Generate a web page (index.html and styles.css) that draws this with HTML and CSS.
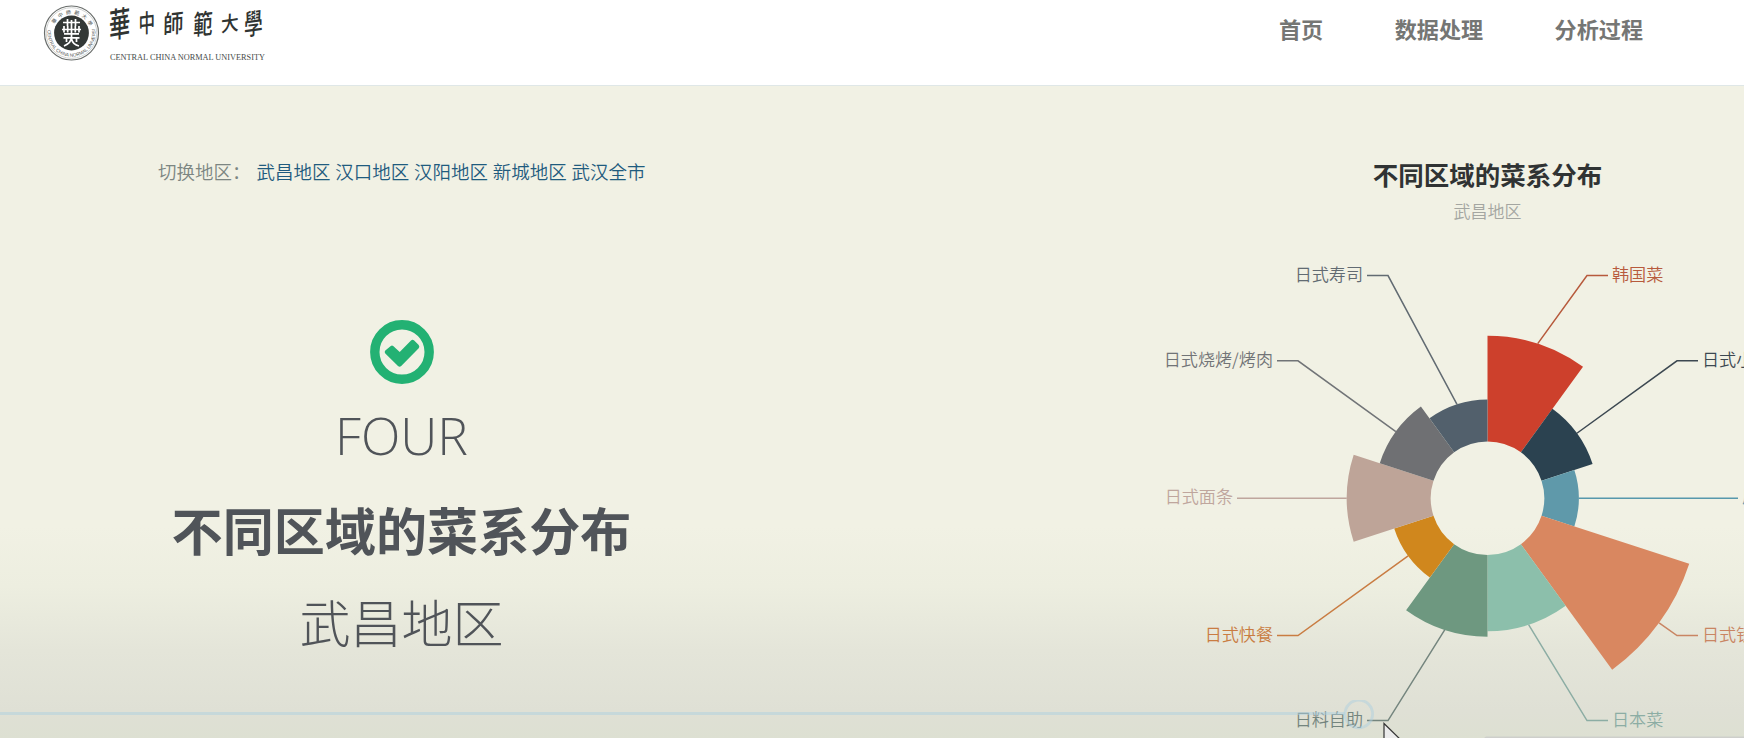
FILE: index.html
```html
<!DOCTYPE html>
<html lang="zh-CN">
<head>
<meta charset="utf-8">
<title>不同区域的菜系分布</title>
<link rel="stylesheet" href="styles.css">
</head>
<body>
<header class="header">
  <svg class="logo" width="240" height="66" viewBox="40 0 240 66">
    <circle cx="71.5" cy="33" r="27" fill="#fff" stroke="#6a6e6c" stroke-width="1.2"/>
    <circle cx="71.5" cy="33" r="25.3" fill="none" stroke="#a5a8a6" stroke-width=".5"/>
    <circle cx="71.5" cy="33" r="17.4" fill="#333836"/>
    <g fill="none" stroke="#fff" stroke-width="1.7">
      <path d="M63 22.500h17M67.500 19v7M75.500 19v7M64 26v6.500M67.700 26v6.500M71.500 20v18M75.300 26v6.500M79 26v6.500M62 29.500h19M64 33.800h15"/>
      <path d="M63.500 37.800h16M71.500 37c0 4-3 7-7.500 9M71.500 39c1 4 3 6 7.500 7M66.500 37.500v4.500M76.500 37.500v4.500"/>
    </g>
    <path id="seal-top" d="M53.500 26a19.500 19.500 0 0 1 36 0" fill="none"/>
    <path id="seal-bottom" d="M47.800 29a24 24 0 1 0 47.400 0" fill="none"/>
    <text class="seal-cn"><textPath href="#seal-top" startOffset="2" textLength="44">華中師範大學</textPath></text>
    <text class="seal-en"><textPath href="#seal-bottom" startOffset="1" textLength="88" lengthAdjust="spacingAndGlyphs">CENTRAL CHINA NORMAL UNIVERSITY</textPath></text>
    <g class="wordmark">
      <text transform="translate(109 38.500) rotate(-10) skewX(-10) scale(.8 1.25)">華</text>
      <text transform="translate(138.500 33.500) rotate(-8) skewX(-8) scale(.62 .92)">中</text>
      <text transform="translate(163 34) rotate(-7) skewX(-8) scale(.76 .92)">師</text>
      <text transform="translate(193 35) rotate(-6) skewX(-8) scale(.72 1)">範</text>
      <text transform="translate(221 32) rotate(-8) skewX(-8) scale(.66 .75)">大</text>
      <text transform="translate(244 35.500) rotate(-8) skewX(-8) scale(.7 1.05)">學</text>
    </g>
    <text class="wordmark-en" x="110" y="59.500" textLength="155" lengthAdjust="spacingAndGlyphs">CENTRAL CHINA NORMAL UNIVERSITY</text>
  </svg>
  <nav class="nav"><a>首页</a><a>数据处理</a><a>分析过程</a></nav>
</header>
<main class="main">
  <section class="intro">
    <p class="switcher"><span class="switcher-label">切换地区：</span><a>武昌地区</a> <a>汉口地区</a> <a>汉阳地区</a> <a>新城地区</a> <a>武汉全市</a></p>
    <div class="summary">
      <svg class="check" width="64" height="64" viewBox="0 0 64 64">
        <circle cx="32" cy="32" r="27.200" fill="none" stroke="#23b173" stroke-width="9.400"/>
        <path d="M20.800 26Q22 25 23.200 26L29.700 32 41 20.500Q42.600 19 44.200 20.500L48.700 25Q50 26.700 48.700 28.300L31.200 46Q29.600 47.500 28 46L15.300 33.500Q14 32 15.300 30.600Z" fill="#23b173"/>
      </svg>
      <p class="step">FOUR</p>
      <h1 class="title">不同区域的菜系分布</h1>
      <p class="area">武昌地区</p>
    </div>
  </section>
  <section class="chart">
    <h2 class="chart-title">不同区域的菜系分布</h2>
    <p class="chart-subtitle">武昌地区</p>
    <svg class="rose" width="604" height="498" viewBox="1140 240 604 498">
      <g id="slices"></g>
      <g id="leaders" fill="none" stroke-width="1.500"></g>
      <g id="labels"></g>
    </svg>
  </section>
  <svg class="timeline" width="1744" height="38" viewBox="0 700 1744 38">
    <path d="M0 713.500H1345" stroke="#add0e0" stroke-opacity=".5" stroke-width="3"/>
    <circle cx="1358.800" cy="714" r="13.800" fill="none" stroke="#add0e0" stroke-opacity=".5" stroke-width="2.800"/>
    <path d="M1486 736.500H1744V738H1484Z" fill="#cecfcb"/>
    <path d="M1384 723.500V745L1404 743Z" fill="#ebebeb" stroke="#333" stroke-width="1.200"/>
  </svg>
</main>
<script src="chart.js"></script>
</body>
</html>
```
FILE: styles.css
```css
* { box-sizing: border-box; }
body { margin: 0; width: 1744px; height: 738px; overflow: hidden; font-family: "Open Sans", "Noto Sans CJK SC", sans-serif; background: #f1f1e4; }
p, h1, h2 { margin: 0; }
svg { display: block; }
.header { height: 86px; display: flex; justify-content: space-between; padding: 0 101px 0 40px; background: #fff; border-bottom: 1px solid #dfe7e7; }
.logo { overflow: visible; }
.nav { display: flex; gap: 71.500px; padding-top: 12px; font: bold 22.100px/32px "Noto Sans CJK SC", sans-serif; color: #757674; }
.seal-cn { font: 5px "Noto Sans CJK TC", sans-serif; fill: #4d5250; }
.seal-en { font: 4.800px "Liberation Sans", sans-serif; fill: #555a58; }
.wordmark { font: 500 27px/1 "Noto Sans CJK TC", sans-serif; fill: #303432; }
.wordmark-en { font: 8px "Liberation Serif", serif; fill: #454a48; }
.main { position: relative; height: 652px; display: grid; grid-template-columns: 1140px 604px; background: linear-gradient(#f1f1e4 0, #f1f1e4 440px, #edeee0 500px, #e4e5d9 565px, #dfe0d5 625px, #dde0d2 652px); }
.switcher { padding: 72px 0 0 158px; height: 234px; font: 350 18.500px/27px "Noto Sans CJK SC", sans-serif; color: #1f5b7e; white-space: nowrap; word-spacing: .6px; }
.switcher-label { color: #7c8682; margin-right: 6px; }
.summary { width: 803px; display: flex; flex-direction: column; align-items: center; color: #505459; }
.step { margin-top: 15px; font: 300 51.500px/72px "Open Sans", sans-serif; }
.title { margin-top: 21px; font: bold 51.100px/74px "Noto Sans CJK SC", sans-serif; }
.area { margin-top: 18px; font: 300 51px/74px "Noto Sans CJK SC", sans-serif; }
.chart { text-align: center; }
.chart-title { padding: 70px 0 0 91px; font: bold 25.500px/36px "Noto Sans CJK SC", sans-serif; color: #303333; }
.chart-subtitle { padding-left: 91px; height: 48px; font: 350 17px/38px "Noto Sans CJK SC", sans-serif; color: #a4a6a1; }
.rose { overflow: hidden; }
.label { font: 350 17.100px "Noto Sans CJK SC", sans-serif; }
.timeline { position: absolute; left: 0; bottom: 0; }
```
FILE: chart.js
```js
const NS = 'http://www.w3.org/2000/svg';
const cx = 1487.5, cy = 498.2, inner = 56.8;
// name, radius, fill, elbow x, leader y, leader end x, text anchor, line and text colour
const data = [
  ['韩国菜', 162.5, '#cd402c', 1587, 275.6, 1608, 'start', '#b75a3c'],
  ['日式小吃', 110.5, '#2b4250', 1677, 360.8, 1698, 'start', '#3c4851'],
  ['居酒屋', 91.3, '#5f99aa', 1700, 498.2, 1738, 'start', '#5798ac'],
  ['日式铁板烧', 212.1, '#d98760', 1677, 635.6, 1698, 'start', '#c98563'],
  ['日本菜', 133, '#8cbfab', 1587, 720.6, 1608, 'start', '#8cada4'],
  ['日料自助', 138.5, '#6e9880', 1388, 720.6, 1367, 'end', '#74857e'],
  ['日式快餐', 98.1, '#d0871d', 1298, 635.6, 1277, 'end', '#c97c42'],
  ['日式面条', 140.7, '#bea498', 1260, 498.2, 1237, 'end', '#bfa69d'],
  ['日式烧烤/烤肉', 113.3, '#6f7073', 1298, 360.8, 1277, 'end', '#717477'],
  ['日式寿司', 98.7, '#52606c', 1388, 275.6, 1367, 'end', '#626b72']
];
const at = (r, deg) => {
  const a = deg * Math.PI / 180;
  return (cx + r * Math.sin(a)).toFixed(2) + ' ' + (cy - r * Math.cos(a)).toFixed(2);
};
const add = (group, tag, attrs) => {
  const el = document.createElementNS(NS, tag);
  for (const k in attrs) el.setAttribute(k, attrs[k]);
  document.getElementById(group).appendChild(el);
  return el;
};
data.forEach(([name, r, fill, ex, ly, lx, anchor, ink], i) => {
  const a = i * 36, b = a + 36;
  add('slices', 'path', { fill, d: `M${at(inner, a)}L${at(r, a)}A${r} ${r} 0 0 1 ${at(r, b)}L${at(inner, b)}A${inner} ${inner} 0 0 0 ${at(inner, a)}Z` });
  add('leaders', 'path', { stroke: ink, d: `M${at(r, a + 18)}L${ex} ${ly}H${lx}` });
  add('labels', 'text', { class: 'label', fill: ink, x: lx + (anchor === 'start' ? 4 : -4), y: ly + 5.2, 'text-anchor': anchor }).textContent = name;
});
```
